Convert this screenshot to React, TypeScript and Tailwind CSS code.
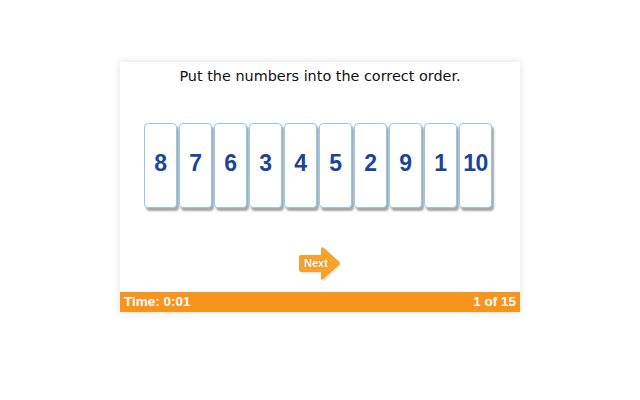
import React from 'react';

const NUMBERS = [8, 7, 6, 3, 4, 5, 2, 9, 1, 10];

const ARROW = 'M2 9 H22 V3 Q22 0 25 2 L40 15.5 Q41.5 17.5 40 19 L25 32.5 Q22 35 22 32 V26 H2 Q0 26 0 24 V11 Q0 9 2 9 Z';

const NextArrow = () => (
    <button className="relative w-[44px] h-[37px]" title="Next">
        <svg width="44" height="37" viewBox="0 0 44 37" className="absolute inset-0">
            <path d={ARROW} fill="#e6e6e6" transform="translate(1.5 1.5)" />
            <path d={ARROW} fill="#f6a22c" />
        </svg>
        <span className="absolute left-[5px] top-[12px] text-[11px] font-bold text-white leading-none [text-shadow:0_0_1px_rgba(150,80,0,0.6)]" style={{ fontFamily: '"Liberation Sans", Arial, sans-serif' }}>Next</span>
    </button>
);

export default function App() {
    return (
        <div className="w-[640px] h-[400px] bg-white pt-[62px]">
            <div className="mx-auto w-[400px] h-[250px] bg-white flex flex-col shadow-[0_0_8px_rgba(0,0,0,0.12)]">
                <div className="h-[28px] pt-[2px] flex items-center justify-center text-[14.4px] text-[#111]" style={{ fontFamily: '"DejaVu Sans", Verdana, sans-serif' }}>
                    Put the numbers into the correct order.
                </div>

                <div className="flex justify-center gap-[2px] mt-[33px] pr-[4px]">
                    {NUMBERS.map(n => (
                        <div key={n} className="w-[33px] h-[85px] pb-[4px] rounded-[4px] border border-[#93c9ee] bg-white shadow-[2px_3px_2px_rgba(0,0,0,0.35)] flex items-center justify-center">
                            <span className="text-[23px] font-bold text-[#1c4596] tracking-[-0.5px]" style={{ fontFamily: '"Liberation Sans", Arial, sans-serif' }}>{n}</span>
                        </div>
                    ))}
                </div>

                <div className="flex justify-center mt-[38px] pl-[2px]">
                    <NextArrow />
                </div>

                <div className="mt-auto h-[20px] bg-[#f7941d] flex items-center justify-between px-[4px] text-white text-[13.5px] font-bold" style={{ fontFamily: '"Liberation Sans", Arial, sans-serif' }}>
                    <span>Time: 0:01</span>
                    <span>1 of 15</span>
                </div>
            </div>
        </div>
    );
}
